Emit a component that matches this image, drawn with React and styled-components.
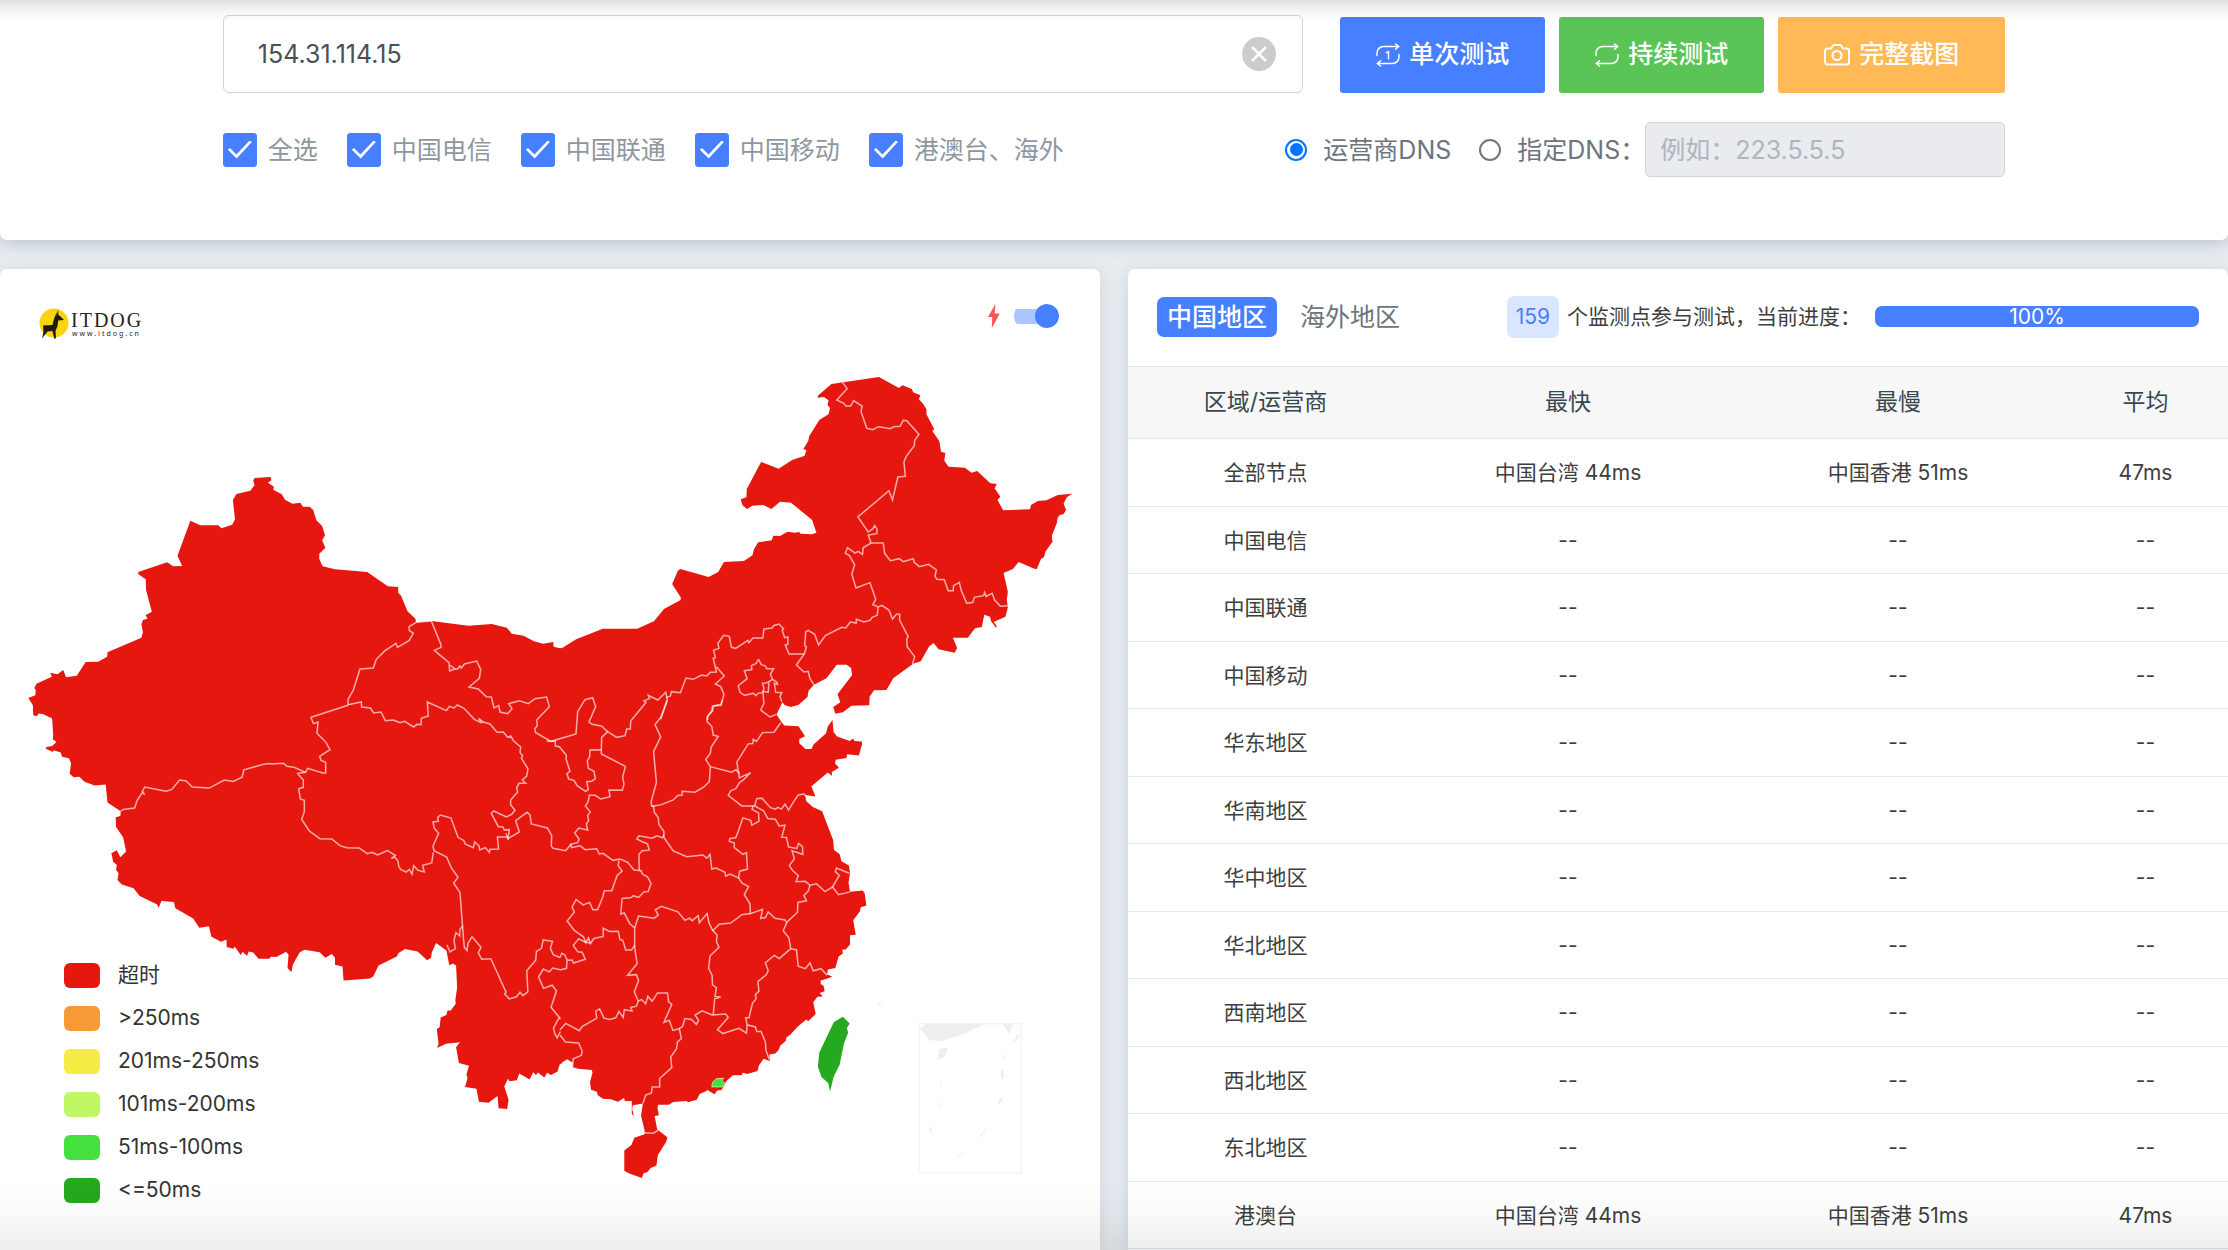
import React, { useState } from "react";
import styled, { createGlobalStyle } from "styled-components";

const GlobalStyle = createGlobalStyle`
  *, *::before, *::after { box-sizing: border-box; }
  body {
    margin: 0;
    background: #e9edf2;
    color: #3e3e3e;
    font-family: Inter, "Noto Sans CJK SC", sans-serif;
    font-size: 21px;
    line-height: 1.5;
  }
  button, input { font: inherit; }
`;

const Page = styled.div`
  position: relative;
  min-height: 100vh;
  display: flex;
  flex-direction: column;
`;

const EdgeShade = styled.div`
  position: fixed;
  left: 0;
  right: 0;
  z-index: 5;
  pointer-events: none;
  ${(p) => p.$edge}: 0;
  height: ${(p) => (p.$edge === "top" ? 24 : 72)}px;
  background: linear-gradient(
    to ${(p) => p.$edge},
    transparent,
    rgba(0, 0, 0, ${(p) => (p.$edge === "top" ? 0.03 : 0.02)}) 50%,
    rgba(0, 0, 0, ${(p) => (p.$edge === "top" ? 0.12 : 0.07)})
  );
`;

/* ---------- query form ---------- */

const QueryPanel = styled.form`
  background: #fff;
  border-radius: 0 0 7px 7px;
  box-shadow: 0 3px 18px rgba(69, 90, 100, 0.3);
  padding: 15px 10% 63px;
  display: flex;
  flex-direction: column;
  gap: 29px;
`;

const Line = styled.div`
  display: flex;
  align-items: ${(p) => p.$align || "center"};
  justify-content: space-between;
`;

const HostField = styled.div`
  flex: 1;
  height: 78px;
  margin-right: 37px;
  padding: 0 26px 0 34px;
  display: flex;
  align-items: center;
  border: 1px solid #ced4da;
  border-radius: 6px;
  background: #fff;
`;

const HostInput = styled.input`
  flex: 1;
  min-width: 0;
  height: 100%;
  padding: 0;
  border: 0;
  outline: 0;
  background: none;
  color: #495057;
  font-size: 25px;
`;

const ClearButton = styled.button`
  width: 34px;
  height: 34px;
  padding: 0;
  display: grid;
  place-items: center;
  border: 0;
  border-radius: 50%;
  background: #ccc;
`;

const Actions = styled.div`
  display: flex;
  gap: 14px;
`;

const ActionButton = styled.button`
  width: ${(p) => (p.$wide ? 227 : 205)}px;
  height: 76px;
  padding: 0;
  display: flex;
  align-items: center;
  justify-content: center;
  gap: 9px;
  border: 0;
  border-radius: 3px;
  background: ${(p) => p.$color};
  color: #fff;
  font-size: 25px;
  font-weight: 500;
`;

const Choices = styled.div`
  display: flex;
  align-items: center;
  gap: ${(p) => p.$gap}px;
`;

const ChoiceLabel = styled.label`
  display: flex;
  align-items: center;
  gap: ${(p) => p.$gap}px;
  color: ${(p) => p.$color};
  font-size: 25px;
  line-height: 36px;
  white-space: nowrap;
`;

const CheckBox = styled.input.attrs({ type: "checkbox" })`
  appearance: none;
  width: 34px;
  height: 34px;
  margin: 0;
  border: 1px solid #adb5bd;
  border-radius: 3px;
  display: grid;
  place-items: center;

  &:checked {
    border-color: #467fff;
    background: #467fff;
  }

  &:checked::before {
    content: "";
    width: 24px;
    height: 18px;
    background: #fff;
    clip-path: polygon(0 52%, 9% 42%, 36% 78%, 91% 0, 100% 9%, 37% 100%);
  }
`;

const Radio = styled.input.attrs({ type: "radio" })`
  appearance: none;
  width: 22px;
  height: 22px;
  margin: 0;
  border: 2px solid #767676;
  border-radius: 50%;
  display: grid;
  place-items: center;
  background: #fff;

  &:checked { border-color: #0075ff; }

  &:checked::before {
    content: "";
    width: 13px;
    height: 13px;
    border-radius: 50%;
    background: #0075ff;
  }
`;

const DnsInput = styled.input`
  width: 360px;
  height: 55px;
  padding: 0 14px;
  border: 1px solid #ced4da;
  border-radius: 5px;
  background: #e9ebef;
  color: #495057;
  font-size: 25px;

  &::placeholder { color: #adb5bd; opacity: 1; }
`;

/* ---------- cards ---------- */

const Columns = styled.main`
  flex: 1;
  margin-top: 29px;
  display: grid;
  grid-template-columns: minmax(0, 1fr) minmax(0, 1fr);
  gap: 28px;
`;

const Card = styled.section`
  background: #fff;
  border-radius: 7px 7px 0 0;
  box-shadow: 0 3px 18px rgba(69, 90, 100, 0.18);
`;

const MapHeader = styled.header`
  height: 71px;
  padding: 34px 41px 0 38px;
  display: flex;
  align-items: flex-start;
  justify-content: space-between;
`;

const SwitchLabel = styled.label`
  display: flex;
  align-items: center;
  gap: 14px;
`;

const Switch = styled.input.attrs({ type: "checkbox", role: "switch" })`
  appearance: none;
  width: 45px;
  height: 24px;
  margin: 0;
  display: flex;
  align-items: center;
  background: linear-gradient(#adc5ff, #adc5ff) center / 100% 15px no-repeat;
  border-radius: 12px;
  clip-path: inset(0 round 8px 12px 12px 8px);

  &::before {
    content: "";
    width: 24px;
    height: 24px;
    border-radius: 50%;
    background: #467fff;
  }

  &:checked::before { margin-left: auto; }
`;

const MapArea = styled.div`
  position: relative;

  > svg { display: block; width: 100%; height: auto; }
`;

const Legend = styled.ul`
  position: absolute;
  left: 64px;
  bottom: 44px;
  margin: 0;
  padding: 0;
  list-style: none;
  display: flex;
  flex-direction: column;
  gap: 11px;
`;

const LegendItem = styled.li`
  display: flex;
  align-items: center;
  gap: 18px;
  color: #333;
  font-size: 21px;
  line-height: 32px;

  &::before {
    content: "";
    width: 36px;
    height: 25px;
    border-radius: 6px;
    background: ${(p) => p.$color};
  }
`;

const ResultHeader = styled.header`
  height: 97px;
  padding: 0 29px 2px;
  display: flex;
  align-items: center;
  justify-content: space-between;
`;

const Tabs = styled.div`
  display: flex;
  gap: 13px;
`;

const Tab = styled.button`
  height: 40px;
  padding: 0 10px;
  border: 0;
  border-radius: 7px;
  background: ${(p) => (p.$active ? "#467fff" : "transparent")};
  color: ${(p) => (p.$active ? "#fff" : "#6c757d")};
  font-size: 25px;
  font-weight: ${(p) => (p.$active ? 500 : 400)};
  line-height: 36px;
  white-space: nowrap;
`;

const Status = styled.div`
  display: flex;
  align-items: center;
  white-space: nowrap;
`;

const Count = styled.span`
  height: 42px;
  margin-right: 8px;
  padding: 0 9px;
  border-radius: 7px;
  background: #dae5ff;
  color: #467fff;
  line-height: 42px;
`;

const Progress = styled.div`
  width: 324px;
  height: 21px;
  margin-left: 14px;
  border-radius: 7px;
  background: #e9ecef;
`;

const ProgressFill = styled.div`
  height: 100%;
  border-radius: 7px;
  background: #467fff;
  color: #fff;
  text-align: center;
  line-height: 21px;
`;

const Table = styled.table`
  width: 100%;
  border-collapse: collapse;
  table-layout: fixed;
  text-align: center;
`;

const Col = styled.col`
  width: ${(p) => p.$width}%;
`;

const HeadCell = styled.th`
  height: 72px;
  padding: 0;
  border-top: 1px solid #e2e8ee;
  border-bottom: 1px solid #e2e8ee;
  background: #f7f7f7;
  color: #37474f;
  font-size: 23px;
  font-weight: 400;
`;

const Cell = styled.td`
  padding: 18px 0 17px;
  border-bottom: 1px solid #e2e8ee;
`;

/* ---------- drawings ---------- */

const strokeIcon = {
  fill: "none",
  stroke: "currentColor",
  strokeLinecap: "round",
  strokeLinejoin: "round",
  "aria-hidden": true,
};

const RepeatIcon = ({ once }) => (
  <svg width="24" height="24" viewBox="0 0 24 24" strokeWidth="1.5" {...strokeIcon}>
    <path d="M1 12.5V10a6.500 6.500 0 0 1 6.500-6.500H22.500M19.500 1l3.300 2.500-3.300 2.800M23 11.500V14a6.500 6.500 0 0 1-6.500 6.500H1.500M4.500 17.700 1.200 20.500l3.300 2.500" />
    {once && <path d="M10.500 9.600l2-1v7.200" />}
  </svg>
);

const CameraIcon = () => (
  <svg width="26" height="24" viewBox="0 0 26 24" strokeWidth="2" {...strokeIcon}>
    <path d="M3.500 5.500H7L9.500 2h7L19 5.500h3.500a2.500 2.500 0 0 1 2.500 2.500v11a2.500 2.500 0 0 1-2.500 2.500h-19A2.500 2.500 0 0 1 1 19V8a2.500 2.500 0 0 1 2.500-2.500z" />
    <circle cx="13" cy="12.500" r="4.500" />
  </svg>
);

const CloseIcon = () => (
  <svg width="16" height="16" viewBox="0 0 16 16" fill="none" stroke="#fff" strokeWidth="2.500" aria-hidden="true">
    <path d="M1 1l14 14M15 1L1 15" />
  </svg>
);

const BoltIcon = () => (
  <svg width="12" height="26" viewBox="0 0 12 26" fill="#ff5252" aria-hidden="true">
    <path d="M7.500 1 0 14h4.300L3.800 25 11.800 10.500H6.600z" />
  </svg>
);

const Logo = () => (
  <svg width="108" height="37" viewBox="0 0 108 37" role="img" aria-label="ITDOG www.itdog.cn">
    <circle cx="16" cy="20" r="14.500" fill="#f9d30b" />
    <path
      fill="#201815"
      d="M20 6.500 18.600 13 18.800 9 15.800 16.500 14.500 22 5 22.500 5.500 29 4 35.500 7.500 31 9.500 28.500 14.500 28 16.200 35.500 18 35.500 17.500 28 19.500 23 20.200 17.500 26 17 22.500 13.500 20.500 12z"
    />
    <text x="33" y="24" fontFamily="'Liberation Serif', serif" fontSize="20" letterSpacing="2" fill="#2b2220">ITDOG</text>
    <text x="34" y="33" fontFamily="'Noto Sans', sans-serif" fontSize="7" letterSpacing="2" fill="#2b2220">www.itdog.cn</text>
  </svg>
);

/* The map is stored as sheets, each one with its own origin and units per pixel. */
const MAP_SHEETS = [
  {
    id: "north-west",
    transform: "translate(0 260) scale(0.357143 0.333333)",
    land: "146,1380 146,1375 120,1361 108,1360 104,1367 94,1365 92,1348 96,1340 79,1314 99,1306 100,1290 96,1284 102,1271 145,1250 141,1238 161,1243 177,1230 185,1252 215,1247 240,1206 275,1205 300,1190 301,1177 396,1133 400,1117 396,1093 400,1080 413,1076 408,1065 425,1055 409,990 408,958 387,942 387,936 468,907 485,919 510,918 497,887 533,782 561,796 611,796 620,805 650,794 658,778 652,720 662,702 701,692 713,675 709,662 713,654 758,651 760,661 750,668 767,680 765,689 789,703 798,719 819,731 841,728 848,740 867,740 877,750 886,781 902,798 910,826 902,841 911,863 894,881 894,896 903,919 938,928 1028,936 1086,979 1115,981 1115,998 1123,1007 1141,1054 1163,1076 1165,1087 1208,1083 1312,1097 1377,1092 1419,1103 1433,1121 1466,1127 1495,1144 1521,1151 1549,1146 1550,1160 1568,1165 1573,1165 1573,1380",
    borders: [],
  },
  {
    id: "north-east",
    transform: "translate(560 260) scale(0.357143 0.333333)",
    land: "-4,1166 5,1165 45,1138 120,1106 216,1106 263,1084 291,1047 338,1020 338,1012 314,972 330,932 337,927 416,951 443,936 459,906 515,903 539,886 543,868 555,847 593,841 597,827 616,828 637,815 658,818 669,816 674,821 705,823 718,818 706,780 647,728 616,725 592,747 569,735 538,737 524,747 511,736 506,718 522,712 523,687 563,606 612,626 650,600 685,587 690,570 681,568 695,543 698,528 726,480 752,463 756,445 749,434 752,421 739,411 722,413 722,407 760,372 893,351 949,384 959,376 985,387 989,397 1009,406 1005,418 1017,432 1026,448 1026,463 1048,508 1042,512 1062,543 1067,575 1079,579 1076,602 1088,620 1134,623 1152,638 1168,633 1205,670 1223,672 1217,685 1233,710 1225,720 1241,751 1316,748 1319,735 1338,723 1362,721 1394,705 1434,701 1419,712 1410,731 1417,750 1410,762 1398,766 1393,775 1391,790 1377,827 1379,845 1360,874 1355,892 1347,896 1335,927 1328,926 1284,906 1268,927 1242,939 1254,995 1251,1020 1254,1042 1247,1070 1214,1086 1223,1098 1221,1103 1207,1084 1204,1070 1188,1064 1181,1101 1162,1105 1142,1133 1100,1133 1112,1164 1105,1178 1060,1168 1046,1149 1034,1159 1010,1204 989,1211 933,1255 914,1290 879,1291 867,1310 866,1336 816,1337 792,1357 771,1361 765,1341 785,1327 777,1303 818,1245 815,1224 802,1214 775,1214 746,1255 711,1274 696,1292 693,1311 667,1335 646,1341 629,1335 621,1325 606,1363 614,1380 -4,1380",
    borders: [
      "791,367 804,386 775,420 795,430 800,438 814,438 822,422 846,438 843,455 859,505 876,509 892,500 925,506 934,500 952,499 961,481 971,482 1005,523 993,541 992,557 969,590 963,606 967,649 946,651 931,720 921,692 834,771 863,816 876,806 881,797 888,808 887,821 863,825 871,849 905,849 909,880 925,902 950,896 961,905 989,896 992,907 1006,920 1032,913 1054,930 1050,948 1055,958 1076,959 1087,992 1101,992 1102,977 1118,967 1123,990 1139,1030 1156,1027 1160,1012 1186,1007 1189,997 1193,1009 1210,1000 1217,1020 1233,1039 1254,1037",
      "871,849 849,863 847,883 835,874 826,879 805,863 799,880 810,886 825,914 817,943 829,984 868,968 884,1018 876,1034 891,1041 901,1036 921,1050 931,1077 942,1063 951,1063 951,1080 975,1130 971,1137 972,1160 993,1190 987,1212",
      "891,1041 888,1066 874,1072 868,1081 851,1086 830,1078 829,1089 813,1086 800,1104 789,1102 743,1127 724,1155 713,1123 695,1111 688,1116 685,1157 690,1161 684,1182 662,1215 683,1236 695,1234 700,1256 711,1274",
      "684,1182 641,1182 631,1155 638,1153 638,1131 629,1133 622,1110 626,1106 613,1092 598,1097 594,1104 571,1107 568,1134 540,1134 529,1148 526,1141 492,1165 480,1162 474,1129 458,1126 442,1150 445,1165 430,1171 435,1193 429,1195 438,1236 421,1237 411,1248 397,1245 373,1258 353,1254 337,1298 312,1295 309,1308 299,1312 296,1297 274,1320 247,1306 251,1316 235,1322 241,1327 198,1383",
      "438,1220 460,1248 435,1272 450,1280 459,1303 451,1336 427,1338 425,1352 414,1368 413,1380",
      "299,1310 300,1322 282,1378",
      "556,1198 563,1213 575,1218 579,1226 598,1226 589,1243 595,1258 580,1268 567,1270 571,1285 568,1298 554,1300 549,1307 541,1300 517,1306 504,1297 499,1277 524,1256 516,1232 537,1229 536,1217 549,1210 556,1198",
      "595,1258 608,1267 609,1273 600,1270 604,1297 621,1298 616,1309 621,1325",
      "585,1268 583,1297 568,1294 571,1330 562,1350 588,1371 606,1363",
    ],
  },
  {
    id: "south-west",
    transform: "translate(0 700) scale(0.357143 0.350765)",
    land: "84,0 92,15 94,44 104,45 108,38 120,40 146,52 149,102 148,112 158,120 146,131 128,135 130,140 148,148 150,143 170,150 174,162 193,166 199,180 195,210 206,220 222,219 237,233 265,244 296,241 301,292 338,317 337,331 324,334 325,362 345,392 353,432 337,448 327,428 312,437 317,462 327,470 325,485 332,493 329,513 341,526 374,537 391,559 440,583 444,593 452,573 487,576 491,594 541,623 558,649 585,645 592,675 619,689 634,683 635,704 654,709 657,703 674,727 679,718 692,730 696,717 709,720 724,738 754,738 759,732 774,733 801,718 808,726 805,764 816,776 820,754 839,720 852,712 895,719 911,735 929,724 938,735 938,755 959,760 962,800 1036,794 1045,788 1060,757 1111,731 1116,721 1134,710 1169,717 1196,742 1207,735 1209,720 1221,693 1250,714 1258,756 1268,751 1277,757 1280,820 1275,855 1276,866 1262,885 1253,885 1250,898 1234,905 1231,933 1223,938 1228,980 1224,992 1249,980 1288,976 1277,990 1285,1035 1313,1043 1306,1068 1309,1078 1302,1103 1334,1108 1341,1145 1368,1148 1393,1129 1396,1164 1420,1166 1424,1140 1412,1102 1422,1080 1427,1087 1447,1084 1454,1065 1483,1082 1493,1061 1501,1070 1506,1062 1524,1076 1532,1063 1543,1069 1561,1059 1568,1037 1573,1037 1573,0",
    borders: [
      "338,317 345,312 377,308 384,286 400,262 405,270 398,262 405,248 465,260 481,255 503,228 521,231 538,248 586,251 628,228 653,232 678,220 683,199 738,183 757,181",
      "1374,737 1393,779 1402,800 1417,833 1413,838 1426,852 1446,846 1456,833 1464,843 1478,832 1475,772 1500,742 1502,717 1516,708 1521,684 1547,688 1541,708 1549,726 1568,734",
      "1568,769 1548,764 1538,775 1521,767 1508,790 1522,822 1546,813 1558,829 1543,876 1566,905 1550,935 1553,950 1560,963 1569,945",
    ],
  },
  {
    id: "south-east",
    transform: "translate(560 700) scale(0.357143 0.350765)",
    land: "-4,0 626,0 621,10 606,41 620,63 628,73 668,75 686,103 670,111 670,123 687,140 704,140 710,127 745,95 750,75 763,57 766,92 776,104 811,117 821,110 824,117 845,118 846,125 837,158 804,155 802,165 772,170 770,180 781,193 761,205 762,217 750,207 704,246 715,275 687,271 689,288 708,305 734,317 765,400 767,427 783,440 788,460 809,472 812,492 808,522 812,547 847,543 853,550 858,586 842,591 840,602 821,628 828,669 812,671 812,697 800,711 790,712 792,723 780,731 771,764 750,768 748,782 762,789 747,795 730,800 730,810 738,815 741,830 727,835 736,845 721,846 709,862 716,895 695,916 690,911 682,917 666,931 646,953 634,962 632,972 617,985 612,998 603,1008 586,1011 588,1029 570,1023 557,1042 553,1058 524,1066 512,1063 508,1070 484,1070 466,1086 458,1103 452,1112 440,1113 433,1124 412,1112 412,1098 417,1105 410,1115 391,1123 383,1140 358,1147 355,1143 317,1146 305,1154 275,1154 273,1163 277,1184 265,1186 272,1224 301,1247 297,1260 274,1297 270,1327 254,1334 244,1346 234,1349 229,1363 194,1350 180,1342 180,1284 200,1269 208,1248 237,1238 237,1228 227,1185 232,1150 204,1155 202,1165 207,1185 201,1180 201,1143 182,1143 179,1135 162,1145 143,1138 120,1137 106,1127 103,1117 87,1111 84,1090 91,1062 89,1055 50,1051 35,1046 37,1035 20,1024 0,1037 -4,1037",
    borders: [
      "300,0 282,50 266,70 282,105 262,147 270,235 255,290 257,303 262,303 264,320 275,335 277,355 291,375 291,392 317,430 355,447 400,442 411,451 420,440 425,482 437,479 462,491 464,502 476,496 500,507 503,488 525,482 522,435 512,440 488,421 488,408 474,403 476,395 492,393 499,375 512,336 534,343 537,357 557,346 556,322 538,312 540,302",
      "257,303 282,299 317,285 330,272 342,271 342,260 378,263 403,248 418,233 421,190 408,170 421,152 423,135 443,104 429,100 425,75 412,62 412,48 427,32 430,17 450,13 455,0",
      "421,190 480,206 493,199 500,208 495,177 527,125 540,124 541,112 550,118 567,93 599,92 618,65",
      "500,203 502,222 534,207 513,228 502,236 492,253 478,259 471,272 509,302 545,302 551,281 566,280 589,307 603,311 610,306 620,311 630,297 640,314 653,292 667,271 684,268 689,275",
      "545,302 570,316 582,338 603,340 614,359 630,357 621,391 634,392 640,419 663,423 668,409 679,418 680,440 650,430 656,453 642,472 652,487 667,500 661,518 687,517 700,528 718,524 742,546 763,533 782,500 771,490 774,479 810,494",
      "763,533 780,555 812,547",
      "700,528 695,545 683,557 690,572 666,577 665,605 635,634 630,627 602,622 583,604 575,620 562,623 567,597 533,609 532,581 516,555 528,532 510,522 500,507",
      "635,634 625,658 641,678 646,709 614,737 600,728 575,749 583,772 578,783 554,803 557,830 547,840 549,852 539,865 529,906 520,906 524,926 547,932 551,945 563,945 575,975 577,1000 586,1025",
      "646,709 662,712 667,759 687,766 700,749 709,772 731,766 748,785",
      "533,609 509,612 478,636 446,639 428,658 440,670 438,688 445,705 420,730 416,765 426,785 427,812 438,820 434,845 450,847 433,852 429,898",
      "428,658 417,635 412,609 390,635 387,615 370,629 363,622 350,628 330,604 284,588 267,598 275,613 264,622 220,616 209,650 209,705 216,752 189,785 214,783 220,800 208,832 219,858",
      "209,650 195,637 180,607 170,610 174,566 200,563 205,558 220,563 235,547 247,546 255,523 245,504 232,497 226,487",
      "222,487 221,440 230,430 250,428 245,410 232,405 215,396 221,387 258,394 272,387 287,393 291,385",
      "165,458 163,472 174,488 160,500 145,544 124,544 120,561 105,598 92,598 83,577 65,584 45,569 34,590 40,605 20,630 40,657 66,675 72,692 80,678 85,695 95,680 121,674 121,651 138,660 163,659 168,683 176,685 184,713 200,713 209,700",
      "85,693 70,690 52,681 37,700 50,718 62,719 71,739 38,750 34,741 20,742 18,765 0,770",
      "20,742 14,727 5,722 0,734",
      "0,910 0,905",
      "0,940 16,922 54,943 62,931 103,907 100,887 111,881 123,907 140,911 156,906 165,888 177,905 180,883 202,887 198,877 214,873 219,858 228,854 240,866 246,845 258,859 273,835 301,835 304,860 313,868 291,919 306,913 316,942 334,937 340,965 329,975 326,995 310,1018 313,1048 279,1079 279,1103 258,1103 256,1120 240,1126 232,1150",
      "334,937 343,931 350,908 368,911 382,925 388,913 378,898 398,886 426,898 464,895 471,905 441,940 456,951 501,936 522,950 524,926",
      "0,955 15,975 52,978 62,1000 60,1013 37,1023 35,1046",
      "237,1234 262,1235 275,1226",
    ],
  },
  {
    id: "interior",
    transform: "translate(270 600) scale(0.333333)",
    borders: [
      "484,63 439,67 417,80 418,92 430,100 417,122 382,142 378,130 345,152 319,178 310,204 270,207 250,270 234,298 234,316",
      "234,316 123,352 130,371 144,366 141,400 168,427 180,449 149,469 153,481 167,487 167,519 158,519 113,505 107,517 83,520 87,526 100,540 100,562 86,566 91,597 103,601 103,635 95,658 118,693 150,716 185,717 210,737 230,743 267,744 292,761 306,757 323,765 352,752 376,766 364,776 374,771 384,783 386,799 392,808 408,816 418,808 426,823 431,797 444,811 463,816 458,796 485,789 490,757",
      "0,492 41,490 51,499 72,502 107,517",
      "234,314 274,306 275,321 301,324 311,339 333,336 346,362 370,360 390,368 404,364 431,381 441,373 453,374 454,355 475,348 472,306 529,332 538,319 552,324 562,315 582,325 613,358 636,369 626,355 640,366 660,372 681,397 700,396 713,412 722,408 731,423 752,441 750,457 758,468 754,474 774,507 770,528 757,540 767,550 747,550 740,563 743,576 722,600 722,615 735,631 725,643 709,651 671,633 664,640 685,680 698,680 703,690 718,689 714,716 711,711 682,711 686,747 660,748 658,757 646,743 629,750 627,738 614,726 610,743 585,732 582,722 564,712 543,654 511,645 503,652 505,664 489,666 493,685 506,700 489,738 492,752 530,771 544,804 564,832 551,849 570,878 580,1010 583,1042 591,1052 594,1030 606,1010 633,1042 625,1058 635,1078 662,1076",
      "578,978 570,988 569,1008 558,998 552,1020 556,1046 540,1056 531,1035",
      "484,63 512,132 513,142 493,151 537,188 539,213 555,207 541,196",
      "555,207 563,207 569,198 574,204 583,192 620,183 632,208 628,235 597,261 625,267 649,290 664,291 672,324 686,317 690,336 713,341 726,326 716,311 748,302 775,311 795,296 830,291 838,320 800,360 802,377 794,387 797,398 843,424 918,402 923,335 945,299 968,293 977,320 957,366 966,373 994,378 1013,395 1040,412 1065,407 1070,387 1081,387 1082,364",
      "830,424 856,424 856,438 868,440 889,466 888,477 900,514 891,521 896,537 912,541 922,558 947,574 955,568 950,545 965,544 976,536 972,514 955,505 952,483 959,470 960,450 994,449 994,462 1066,499 1058,531 1062,553 1057,571 1017,570 1020,590 992,597 976,586 958,586 954,606 946,618 961,636 953,646 956,662 949,672 953,690 926,684 914,699 927,717 923,728 902,733 905,743 930,737",
      "994,449 995,412 1013,395",
      "708,700 714,716 748,696 737,662 771,637 780,645 784,672 832,684 845,706 844,738 849,745 887,752 903,733",
      "930,737 945,749 980,746 988,762 999,760 1029,781 1050,777 1073,787 1092,810 1116,812",
    ],
  },
];

const INSET_SHAPES = [
  "1008,937 1027,923 1190,923 1130,952 1068,973 1035,969",
  "1240,923 1269,923 1258,952",
  "1063,995 1086,991 1075,1020 1056,1025",
  "1286,950 1280,970 1268,978 1276,960",
  "1254,1002 1243,1022 1240,1020",
  "1235,1053 1242,1053 1242,1080 1235,1080",
  "1239,1131 1236,1145 1225,1156 1229,1138",
  "1202,1208 1180,1245 1173,1246",
  "1137,1290 1118,1300 1110,1298",
  "1031,1217 1039,1220 1043,1243",
  "1082,1140 1062,1165 1060,1162",
  "1059,1069 1070,1096 1067,1098",
];

const ChinaMap = () => (
  <svg viewBox="0 340 1100 910" role="img" aria-label="中国地区">
    {MAP_SHEETS.map((s) =>
      s.land ? <polygon key={s.id} points={s.land} transform={s.transform} fill="#e6170f" /> : null
    )}
    {MAP_SHEETS.map((s) => (
      <g key={s.id} transform={s.transform} fill="none" stroke="#fff" strokeOpacity="0.65">
        {s.borders.map((b) => (
          <polyline key={b} points={b} strokeWidth="1.5" vectorEffect="non-scaling-stroke" />
        ))}
      </g>
    ))}
    <g transform="translate(560 700) scale(0.357143 0.350765)">
      <polygon points="425,1103 427,1090 437,1080 458,1078 453,1087 461,1091 458,1103" fill="#44e03e" stroke="#d9f2c8" strokeWidth="2" />
      <polygon points="792,903 811,922 803,935 807,948 795,980 783,1040 766,1075 756,1117 751,1092 732,1075 722,1045 726,1005 767,918" fill="#26a81f" />
      <polygon points="886,869 898,862 898,871" fill="#eee" />
      <rect x="1006" y="923" width="286" height="425" fill="none" stroke="#f4f4f4" strokeWidth="4" />
      {INSET_SHAPES.map((s) => (
        <polygon key={s} points={s} fill="#eee" />
      ))}
    </g>
  </svg>
);

/* ---------- data ---------- */

const CARRIERS = ["全选", "中国电信", "中国联通", "中国移动", "港澳台、海外"];

const LEVELS = [
  ["超时", "#e6170f"],
  [">250ms", "#f79a36"],
  ["201ms-250ms", "#f6ec45"],
  ["101ms-200ms", "#bff764"],
  ["51ms-100ms", "#44e03e"],
  ["<=50ms", "#26a81f"],
];

const MEASURED = ["中国台湾 44ms", "中国香港 51ms", "47ms"];
const EMPTY = ["--", "--", "--"];

const ROWS = [
  ["全部节点", MEASURED],
  ["中国电信", EMPTY],
  ["中国联通", EMPTY],
  ["中国移动", EMPTY],
  ["华东地区", EMPTY],
  ["华南地区", EMPTY],
  ["华中地区", EMPTY],
  ["华北地区", EMPTY],
  ["西南地区", EMPTY],
  ["西北地区", EMPTY],
  ["东北地区", EMPTY],
  ["港澳台", MEASURED],
];

export default function App() {
  const [host, setHost] = useState("154.31.114.15");
  const [dns, setDns] = useState("isp");
  const [region, setRegion] = useState("中国地区");
  const progress = 100;

  return (
    <Page>
      <GlobalStyle />
      <EdgeShade $edge="top" />
      <EdgeShade $edge="bottom" />

      <QueryPanel onSubmit={(e) => e.preventDefault()}>
        <Line $align="flex-end">
          <HostField>
            <HostInput aria-label="IP" value={host} onChange={(e) => setHost(e.target.value)} />
            <ClearButton type="button" aria-label="清除" onClick={() => setHost("")}>
              <CloseIcon />
            </ClearButton>
          </HostField>
          <Actions>
            <ActionButton type="submit" $color="#467fff"><RepeatIcon once />单次测试</ActionButton>
            <ActionButton type="button" $color="#5ac457"><RepeatIcon />持续测试</ActionButton>
            <ActionButton type="button" $color="#ffb957" $wide><CameraIcon />完整截图</ActionButton>
          </Actions>
        </Line>
        <Line>
          <Choices $gap={29}>
            {CARRIERS.map((name) => (
              <ChoiceLabel key={name} $gap={11} $color="#8e979f">
                <CheckBox defaultChecked />
                {name}
              </ChoiceLabel>
            ))}
          </Choices>
          <Choices $gap={28}>
            <ChoiceLabel $gap={16} $color="#6c757d">
              <Radio name="dns" checked={dns === "isp"} onChange={() => setDns("isp")} />
              运营商DNS
            </ChoiceLabel>
            <Choices $gap={0}>
              <ChoiceLabel $gap={16} $color="#6c757d">
                <Radio name="dns" checked={dns === "custom"} onChange={() => setDns("custom")} />
                指定DNS：
              </ChoiceLabel>
              <DnsInput aria-label="指定DNS" placeholder="例如：223.5.5.5" disabled={dns !== "custom"} />
            </Choices>
          </Choices>
        </Line>
      </QueryPanel>

      <Columns>
        <Card>
          <MapHeader>
            <Logo />
            <SwitchLabel>
              <BoltIcon />
              <Switch defaultChecked aria-label="快速" />
            </SwitchLabel>
          </MapHeader>
          <MapArea>
            <ChinaMap />
            <Legend>
              {LEVELS.map(([label, color]) => (
                <LegendItem key={label} $color={color}>{label}</LegendItem>
              ))}
            </Legend>
          </MapArea>
        </Card>

        <Card>
          <ResultHeader>
            <Tabs>
              {["中国地区", "海外地区"].map((name) => (
                <Tab key={name} type="button" $active={region === name} onClick={() => setRegion(name)}>
                  {name}
                </Tab>
              ))}
            </Tabs>
            <Status>
              <Count>159</Count>
              个监测点参与测试，当前进度：
              <Progress role="progressbar" aria-valuenow={progress} aria-label="当前进度">
                <ProgressFill style={{ width: `${progress}%` }}>{progress}%</ProgressFill>
              </Progress>
            </Status>
          </ResultHeader>
          <Table>
            <colgroup>
              <Col $width={25} />
              <Col $width={30} />
              <Col $width={30} />
              <Col $width={15} />
            </colgroup>
            <thead>
              <tr>
                {["区域/运营商", "最快", "最慢", "平均"].map((h) => (
                  <HeadCell key={h} scope="col">{h}</HeadCell>
                ))}
              </tr>
            </thead>
            <tbody>
              {ROWS.map(([name, values]) => (
                <tr key={name}>
                  <Cell>{name}</Cell>
                  {values.map((v, i) => (
                    <Cell key={i}>{v}</Cell>
                  ))}
                </tr>
              ))}
            </tbody>
          </Table>
        </Card>
      </Columns>
    </Page>
  );
}
